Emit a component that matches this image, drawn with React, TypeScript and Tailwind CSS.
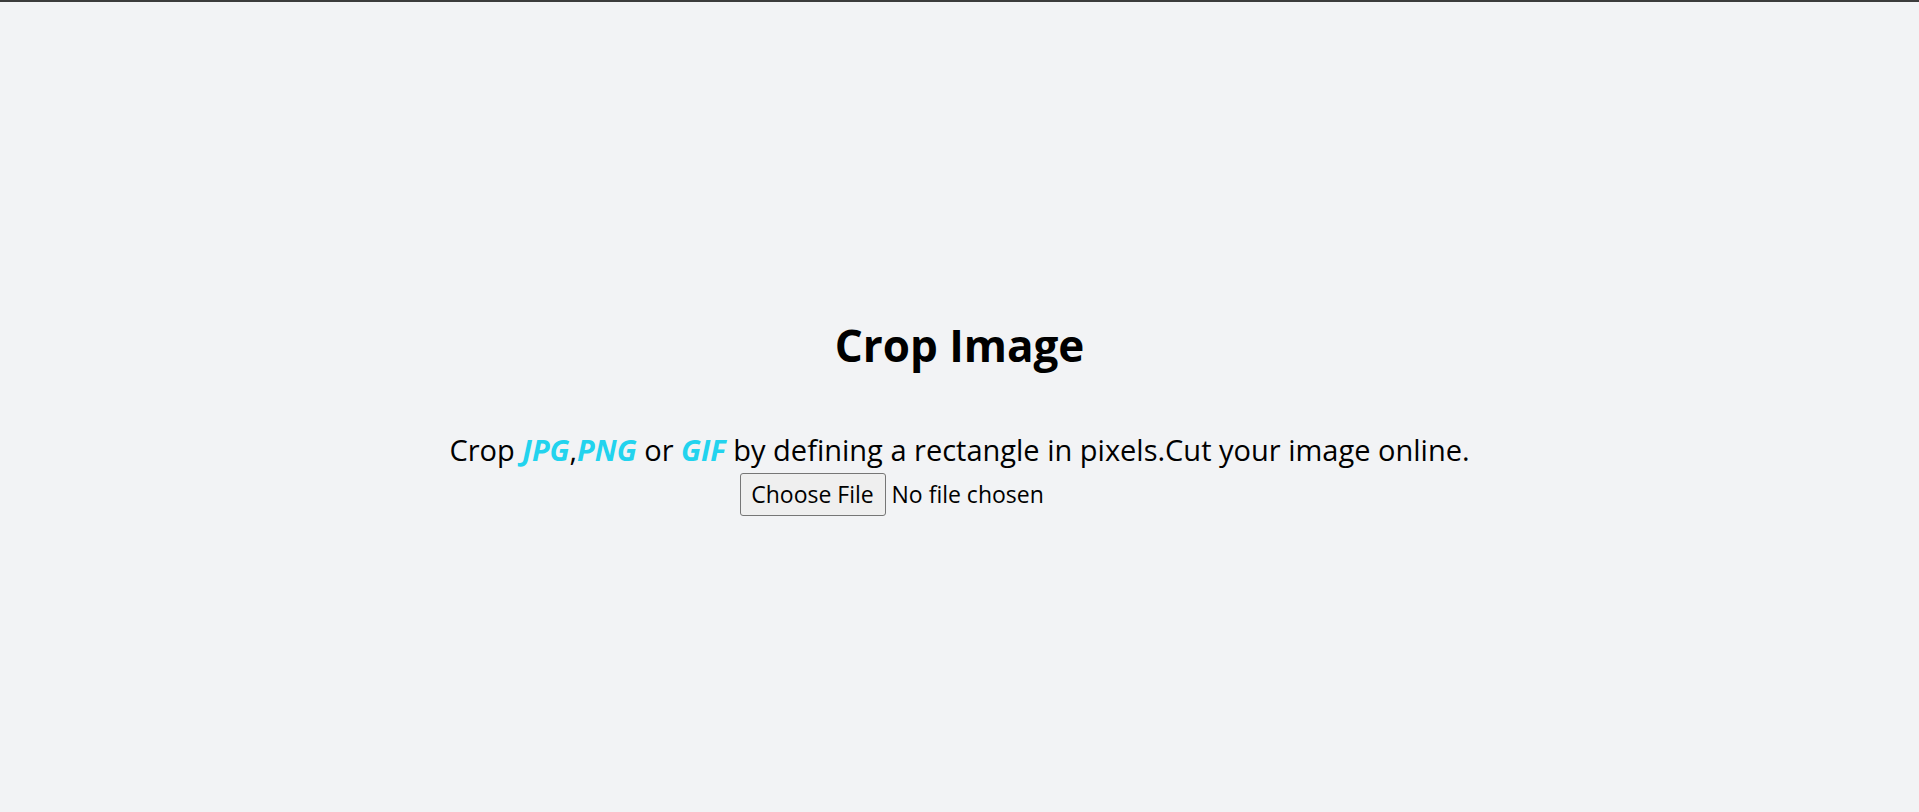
import React from "react";

export default function App() {
  return (
    <div
      className="min-h-[812px] bg-[#f2f3f5] text-black"
      style={{ fontFamily: '"Open Sans", "Noto Sans", sans-serif' }}
    >
      <div className="h-[2px] bg-[#3c3c3c]" />
      <div className="flex flex-col items-center pt-[317px]">
        <h1 className="text-[44px] leading-[52px] font-bold">Crop Image</h1>
        <p className="mt-[59px] text-[29px] leading-[39px]">
          Crop{" "}
          <b className="italic text-[#22d3ee]">JPG</b>,
          <b className="italic text-[#22d3ee]">PNG</b> or{" "}
          <b className="italic text-[#22d3ee]">GIF</b> by defining a rectangle in
          pixels.Cut your image online.
        </p>
        <div className="mt-[4px] flex w-[440px] items-center">
          <button className="h-[43px] w-[146px] rounded-[3px] border border-[#767676] bg-[#efefef] text-[23px] leading-none">
            Choose File
          </button>
          <span className="ml-[6px] text-[23px]">No file chosen</span>
        </div>
      </div>
    </div>
  );
}
